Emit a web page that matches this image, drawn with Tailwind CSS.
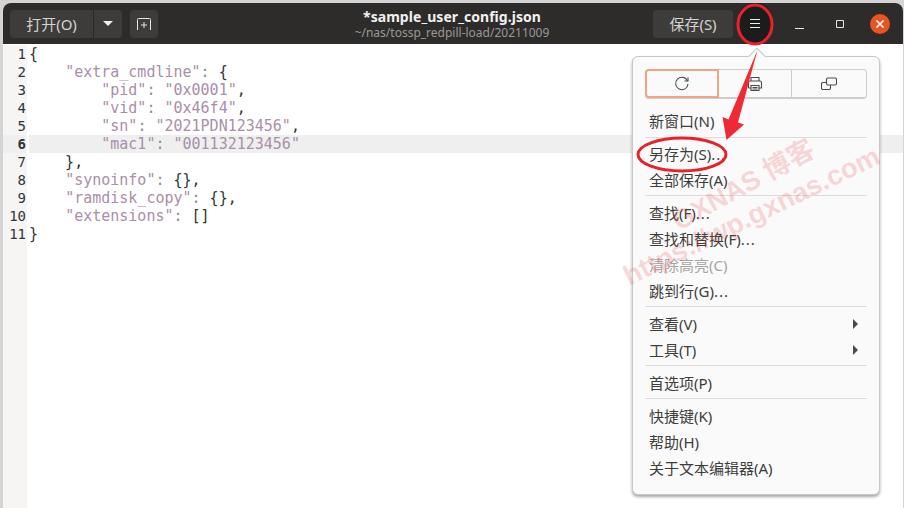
<!DOCTYPE html>
<html lang="zh-CN">
<head>
    <meta charset="UTF-8">
    <title>sample_user_config.json</title>
    <script src="https://cdn.jsdelivr.net/npm/@tailwindcss/browser@4"></script>
</head>
<body class="bg-[#d4d4d4] overflow-hidden">
<div class="relative w-[904px] h-[508px] pl-[3px] pt-[3px] pr-px font-['Noto_Sans','Noto_Sans_CJK_SC',sans-serif]">

    <!-- window -->
    <div class="flex flex-col h-full bg-white rounded-t-[8px] overflow-hidden">
        <header class="relative flex items-center h-[41px] shrink-0 bg-[#2d2c2b] pl-[7px] pr-[13px] text-[#d5d3d0]">
            <div class="flex h-[28px] rounded-[4px] bg-[#3e3c3a]">
                <button class="w-[84px] text-[15px] leading-[28px] border-r border-[#2a2928]">打开(O)</button>
                <button class="w-[28px] flex items-center justify-center">
                    <svg width="10" height="5" viewBox="0 0 10 5"><path d="M0 0h10L5 5z" fill="#f0efed"/></svg>
                </button>
            </div>
            <button class="ml-[8px] w-[28px] h-[28px] rounded-[4px] bg-[#3e3c3a] flex items-center justify-center">
                <svg width="16" height="14" viewBox="0 0 16 14" fill="none" stroke="#e8e6e3" stroke-width="1">
                    <path d="M1.500 13V2.500a1 1 0 0 1 1-1h11a1 1 0 0 1 1 1V13M8 5v6M5 8h6"/>
                </svg>
            </button>

            <div class="absolute left-[259px] w-[380px] top-[5px] text-center">
                <div class="text-[14px] leading-[18px] font-bold tracking-[0.05px] text-[#f2f1ef]">*sample_user_config.json</div>
                <div class="text-[12px] leading-[14px] text-[#9b9996]">~/nas/tossp_redpill-load/20211009</div>
            </div>

            <button class="ml-auto w-[80px] h-[28px] rounded-[4px] bg-[#3e3c3a] text-[15px] leading-[28px]">保存(S)</button>
            <button class="ml-[5px] w-[34px] h-[41px] rounded-[16px] bg-[#1d1c1c] flex items-center justify-center">
                <svg width="12" height="10" viewBox="0 0 12 10" stroke="#eeeeec" stroke-width="1"><path d="M1 .5h10M1 4.500h10M1 8.500h10"/></svg>
            </button>
            <button class="ml-[17px] w-[22px] flex justify-center">
                <svg width="10" height="10" viewBox="0 0 10 10" stroke="#e8e6e3" stroke-width="1"><path d="M0 9.500h9"/></svg>
            </button>
            <button class="ml-[18px] w-[22px] flex justify-center">
                <svg width="10" height="10" viewBox="0 0 10 10" fill="none" stroke="#e8e6e3" stroke-width="1"><path d="M1.500 1.500h7v7h-7z"/></svg>
            </button>
            <button class="ml-[19px] w-[20px] h-[20px] rounded-full bg-[#e95420] flex items-center justify-center">
                <svg width="10" height="10" viewBox="0 0 10 10" stroke="#fff" stroke-width="1.600"><path d="M1.500 1.500l7 7M8.500 1.500l-7 7"/></svg>
            </button>
        </header>

        <!-- editor -->
        <main class="flex flex-1 font-['DejaVu_Sans_Mono',monospace] text-[15px] leading-[18px] text-[#2e3436] pt-px">
            <div class="w-[24px] shrink-0 bg-[#f6f5f4] text-right text-[14px] pr-px">
                <div>1</div><div>2</div><div>3</div><div>4</div><div>5</div>
                <div class="font-bold bg-[#efefef]">6</div>
                <div>7</div><div>8</div><div>9</div><div>10</div><div>11</div>
            </div>
            <div class="flex-1 pl-[2px] [&>div]:whitespace-pre">
                <div>{</div>
                <div>    <span class="text-[#a98fa8]">"extra_cmdline"</span><span class="text-[#8a8f92]">:</span> {</div>
                <div>        <span class="text-[#a98fa8]">"pid"</span><span class="text-[#8a8f92]">:</span> <span class="text-[#a98fa8]">"0x0001"</span>,</div>
                <div>        <span class="text-[#a98fa8]">"vid"</span><span class="text-[#8a8f92]">:</span> <span class="text-[#a98fa8]">"0x46f4"</span>,</div>
                <div>        <span class="text-[#a98fa8]">"sn"</span><span class="text-[#8a8f92]">:</span> <span class="text-[#a98fa8]">"2021PDN123456"</span>,</div>
                <div class="bg-[#efefef]">        <span class="text-[#a98fa8]">"mac1"</span><span class="text-[#8a8f92]">:</span> <span class="text-[#a98fa8]">"001132123456"</span></div>
                <div>    },</div>
                <div>    <span class="text-[#a98fa8]">"synoinfo"</span><span class="text-[#8a8f92]">:</span> {},</div>
                <div>    <span class="text-[#a98fa8]">"ramdisk_copy"</span><span class="text-[#8a8f92]">:</span> {},</div>
                <div>    <span class="text-[#a98fa8]">"extensions"</span><span class="text-[#8a8f92]">:</span> []</div>
                <div>}</div>
            </div>
        </main>
    </div>

    <!-- popover menu -->
    <div class="absolute left-[632px] top-[56px] w-[248px] h-[439px] rounded-[6px] bg-[#fafafa] border border-[#c9c7c4] shadow-[0_2px_3px_rgba(0,0,0,0.35)] px-[12px] pt-[12px] text-[15px] leading-[26px] text-[#3d3d3a]">
        <div class="absolute left-[118px] -top-[7px] w-[12px] h-[12px] rotate-45 bg-[#fafafa] border-l border-t border-[#c9c7c4]"></div>

        <div class="relative flex h-[30px] rounded-[4px] border border-[#cfcdca] border-b-2 mb-[9px]">
            <button class="w-[74px] -my-px -ml-px rounded-l-[4px] border-2 border-[#f0a585] flex items-center justify-center">
                <svg width="16" height="16" viewBox="0 0 16 16" fill="none" stroke="#4a4a48" stroke-width="1.100"><path d="M13.500 5A6.200 6.200 0 1 0 14 8"/><path d="M10.500 5h3.500V1.500" /></svg>
            </button>
            <button class="w-[73px] border-r border-[#cfcdca] flex items-center justify-center">
                <svg width="16" height="16" viewBox="0 0 16 16" fill="none" stroke="#4a4a48" stroke-width="1.100"><path d="M4 5V1.500h8V5M1.500 12V6.500a1.500 1.500 0 0 1 1.500-1.500h10a1.500 1.500 0 0 1 1.500 1.500V12H12M4 12H1.500M4 9.500h8v5H4zM5.500 11.500h5M5.500 13h5"/></svg>
            </button>
            <button class="flex-1 flex items-center justify-center">
                <svg width="16" height="14" viewBox="0 0 16 14" fill="none" stroke="#4a4a48" stroke-width="1.100"><rect x="5.500" y="1" width="10" height="7" rx="1.500"/><path d="M5.500 5.500H2A1.500 1.500 0 0 0 .5 7v4A1.500 1.500 0 0 0 2 12.500h6A1.500 1.500 0 0 0 9.500 11V8"/></svg>
            </button>
        </div>

        <div class="px-[4px]">新窗口(N)</div>
        <div class="h-px bg-[#dedcda] mt-[3px] mb-[3px]"></div>
        <div class="px-[4px]">另存为(S)<span class="tracking-[1px]">...</span></div>
        <div class="px-[4px]">全部保存(A)</div>
        <div class="h-px bg-[#dedcda] mt-[2px] mb-[4px]"></div>
        <div class="px-[4px]">查找(F)<span class="tracking-[1px]">...</span></div>
        <div class="px-[4px]">查找和替换(F)<span class="tracking-[1px]">...</span></div>
        <div class="px-[4px] text-[#a5a5a3]">清除高亮(C)</div>
        <div class="px-[4px]">跳到行(G)<span class="tracking-[1px]">...</span></div>
        <div class="h-px bg-[#dedcda] mt-[2px] mb-[4px]"></div>
        <div class="px-[4px] pr-[9px] flex items-center justify-between">查看(V)
            <svg width="5" height="10" viewBox="0 0 5 10"><path d="M0 0l5 5-5 5z" fill="#4a4a48"/></svg>
        </div>
        <div class="px-[4px] pr-[9px] flex items-center justify-between">工具(T)
            <svg width="5" height="10" viewBox="0 0 5 10"><path d="M0 0l5 5-5 5z" fill="#4a4a48"/></svg>
        </div>
        <div class="h-px bg-[#dedcda] mt-[2px] mb-[4px]"></div>
        <div class="px-[4px]">首选项(P)</div>
        <div class="h-px bg-[#dedcda] mt-[2px] mb-[4px]"></div>
        <div class="px-[4px]">快捷键(K)</div>
        <div class="px-[4px]">帮助(H)</div>
        <div class="px-[4px]">关于文本编辑器(A)</div>
    </div>

    <!-- watermark -->
    <div class="absolute left-[665px] top-[172px] -rotate-[29deg] text-[27px] font-bold leading-none text-[#e8383d]/20 whitespace-nowrap font-['Liberation_Sans','Noto_Sans_CJK_SC',sans-serif]">GXNAS 博客</div>
    <div class="absolute left-[611px] top-[202px] -rotate-[26deg] text-[27.500px] font-bold leading-none text-[#e8383d]/20 whitespace-nowrap font-['Liberation_Sans',sans-serif]">https://wp.gxnas.com</div>

    <!-- red annotations -->
    <svg class="absolute left-0 top-0 pointer-events-none" width="904" height="508" viewBox="0 0 904 508" fill="none">
        <ellipse cx="755" cy="24.500" rx="17" ry="19.500" stroke="#e8212e" stroke-width="3"/>
        <ellipse cx="682" cy="154.500" rx="44" ry="16.500" stroke="#e8212e" stroke-width="3"/>
        <path d="M757.500 50L738 122.500 744 124.500 726.500 140 722.500 117 728.500 119.500z" fill="#ee2a35"/>
    </svg>
</div>
</body>
</html>
